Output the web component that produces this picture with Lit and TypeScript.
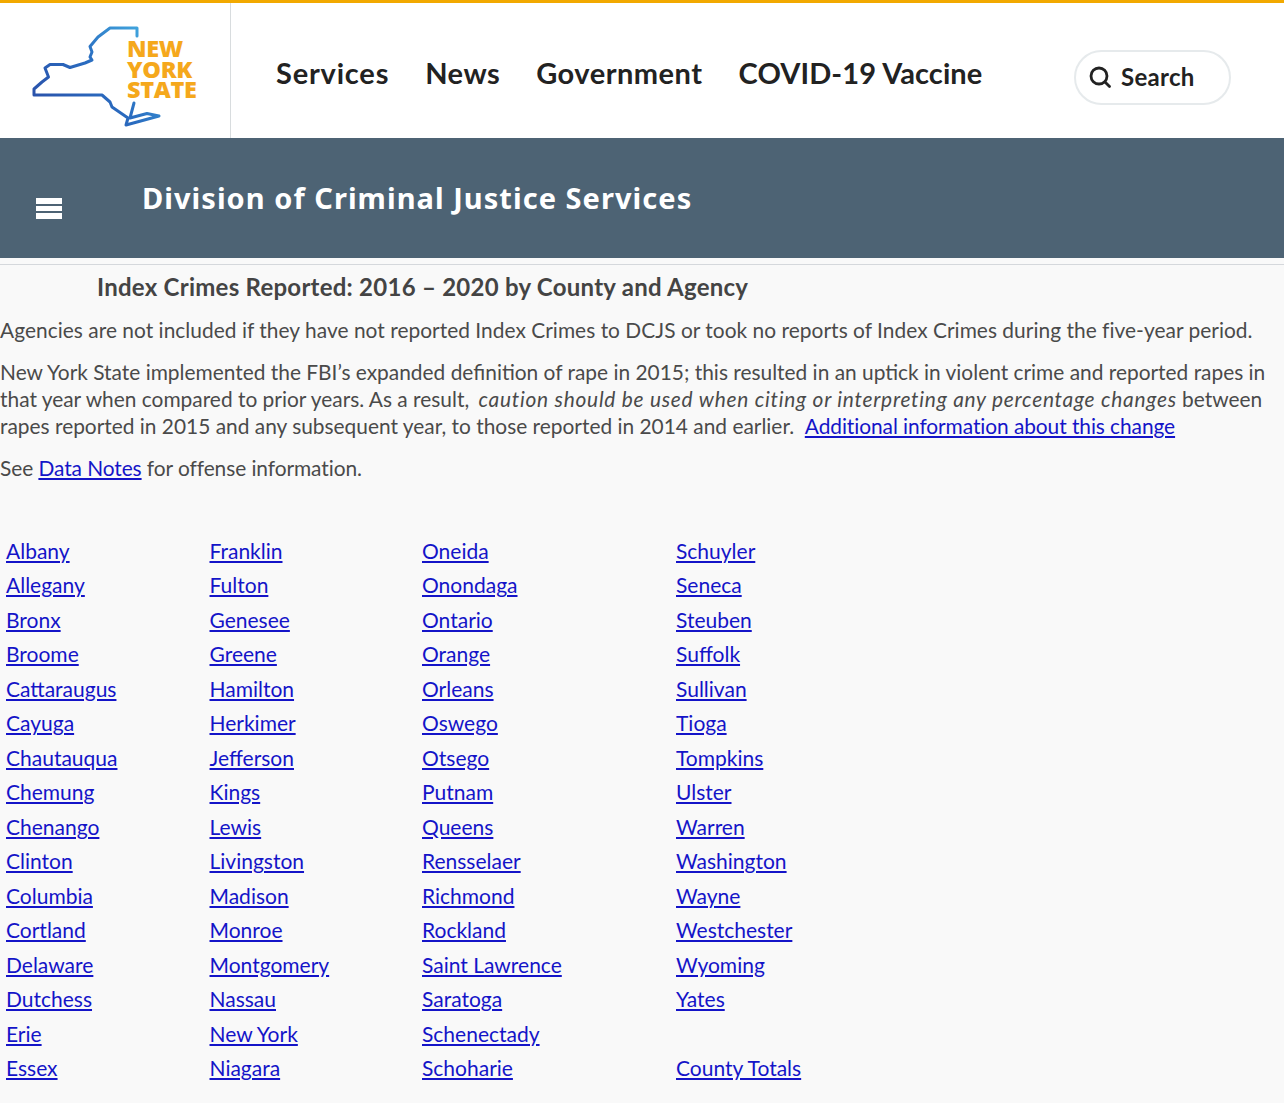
import { LitElement, html, css, svg } from "lit";
import { customElement } from "lit/decorators.js";

const rows: string[][] = [
  ["Albany", "Franklin", "Oneida", "Schuyler"],
  ["Allegany", "Fulton", "Onondaga", "Seneca"],
  ["Bronx", "Genesee", "Ontario", "Steuben"],
  ["Broome", "Greene", "Orange", "Suffolk"],
  ["Cattaraugus", "Hamilton", "Orleans", "Sullivan"],
  ["Cayuga", "Herkimer", "Oswego", "Tioga"],
  ["Chautauqua", "Jefferson", "Otsego", "Tompkins"],
  ["Chemung", "Kings", "Putnam", "Ulster"],
  ["Chenango", "Lewis", "Queens", "Warren"],
  ["Clinton", "Livingston", "Rensselaer", "Washington"],
  ["Columbia", "Madison", "Richmond", "Wayne"],
  ["Cortland", "Monroe", "Rockland", "Westchester"],
  ["Delaware", "Montgomery", "Saint Lawrence", "Wyoming"],
  ["Dutchess", "Nassau", "Saratoga", "Yates"],
  ["Erie", "New York", "Schenectady", ""],
  ["Essex", "Niagara", "Schoharie", "County Totals"],
];

@customElement("app-root")
export class AppRoot extends LitElement {
  static styles = css`
    :host {
      display: block;
      width: 1284px;
      height: 1103px;
      overflow: hidden;
      background: #f9f9f9;
      font-family: "Lato", "Open Sans", sans-serif;
      color: #4a4a4a;
    }
    .top {
      display: flex;
      height: 135px;
      background: #fff;
      border-top: 3px solid #f2a900;
    }
    .logo {
      position: relative;
      width: 230px;
      flex: none;
      border-right: 1px solid #d8dcde;
    }
    .logo svg { position: absolute; left: 0; top: -3px; }
    .logo-text {
      position: absolute;
      left: 127px;
      top: 35px;
      font: 800 23.500px/20.500px "Open Sans", sans-serif;
      letter-spacing: -0.35px;
      color: #f5a81c;
    }
    .nav {
      display: flex;
      gap: 36px;
      padding: 52px 0 0 45px;
      font-size: 29px;
      font-weight: 700;
      line-height: 36px;
      letter-spacing: 0.5px;
      color: #222;
      flex: 1;
    }
    .nav span { white-space: nowrap; }
    .nav .services { letter-spacing: 0.8px; }
    .nav .vaccine { letter-spacing: 0.1px; }
    .search {
      display: flex;
      align-items: center;
      gap: 9px;
      box-sizing: border-box;
      width: 157px;
      height: 55px;
      margin: 47px 53px 0 0;
      padding: 0 0 2px 12px;
      border: 2px solid #e6eaec;
      border-radius: 28px;
      font-size: 24px;
      font-weight: 700;
      letter-spacing: 0.3px;
      color: #222;
    }
    .band {
      display: flex;
      height: 120px;
      background: #4d6374;
      color: #fff;
    }
    .burger {
      display: flex;
      flex-direction: column;
      gap: 2px;
      width: 26px;
      margin: 60px 0 0 36px;
      flex: none;
    }
    .burger i { display: block; height: 5.700px; background: #fff; }
    .band h2 {
      margin: 43px 0 0 80px;
      font: 700 29px/34px "Noto Sans", sans-serif;
      letter-spacing: 1.040px;
      white-space: nowrap;
    }
    .rule { height: 1px; margin-top: 6px; background: #d5d8dc; }
    .content { font-size: 20.900px; line-height: 27px; }
    h3 {
      margin: 8px 0 0 97px;
      font-size: 24px;
      line-height: 27px;
      font-weight: 700;
      letter-spacing: 0.25px;
      color: #444;
    }
    p { margin: 15px 0 0; }
    .lead { margin-top: 16px; letter-spacing: 0.035px; }
    .wide em { margin-left: 4px; letter-spacing: 0.75px; }
    .wide a { letter-spacing: -0.07px; }
    .see { letter-spacing: -0.07px; }
    a { color: #1414c8; text-decoration: underline; text-underline-offset: 2px; }
    .counties {
      display: grid;
      grid-template-columns: 203.500px 212.500px 254px 1fr;
      grid-auto-rows: 34.500px;
      margin: 52.500px 0 0 6px;
      font-size: 21px;
      line-height: 34.500px;
    }
  `;

  private logo() {
    return html`<svg width="230" height="139" viewBox="0 0 230 139" fill="none">
      <defs>
        <linearGradient id="ny" x1="34" y1="110" x2="137" y2="28" gradientUnits="userSpaceOnUse">
          <stop offset="0" stop-color="#2a4fa8"></stop>
          <stop offset="0.55" stop-color="#2a6cc0"></stop>
          <stop offset="1" stop-color="#3fa2dc"></stop>
        </linearGradient>
      </defs>
      ${svg`<path stroke="url(#ny)" stroke-width="3" stroke-linejoin="round" stroke-linecap="round"
        d="M137 36V28H110L98 37L90 46.500L92 52L90 57L92 60L85 63L70 67.500L63 64.500H50L45 68L48.500 77L42 82L34 89V95H102L110 102L112 107L128 118L126 125L159 116L147 113.500L130 118L134 103" />`}
    </svg>`;
  }

  render() {
    return html`
      <div class="top">
        <div class="logo">
          ${this.logo()}
          <div class="logo-text">NEW<br />YORK<br />STATE</div>
        </div>
        <div class="nav">
          <span class="services">Services</span><span>News</span><span>Government</span><span class="vaccine">COVID-19 Vaccine</span>
        </div>
        <div class="search">
          <svg width="24" height="24" viewBox="0 0 24 24" fill="none" stroke="#222" stroke-width="2.800" stroke-linecap="round">
            <circle cx="11" cy="11" r="8"></circle>
            <path d="M17 17l4.500 4.500"></path>
          </svg>
          <span>Search</span>
        </div>
      </div>
      <div class="band">
        <div class="burger"><i></i><i></i><i></i></div>
        <h2>Division of Criminal Justice Services</h2>
      </div>
      <div class="rule"></div>
      <div class="content">
        <h3>Index Crimes Reported: 2016 – 2020 by County and Agency</h3>
        <p class="lead">Agencies are not included if they have not reported Index Crimes to DCJS or took no reports of Index Crimes during the five-year period.</p>
        <p class="wide">New York State implemented the FBI’s expanded definition of rape in 2015; this resulted in an uptick in violent crime and reported rapes in that year when compared to prior years. As a result, <em>caution should be used when citing or interpreting any percentage changes</em> between rapes reported in 2015 and any subsequent year, to those reported in 2014 and earlier.&nbsp; <a href="#">Additional information about this change</a></p>
        <p class="see">See <a href="#">Data Notes</a> for offense information.</p>
        <div class="counties">
          ${rows.map((r) => r.map((c) => html`<div>${c ? html`<a href="#">${c}</a>` : ""}</div>`))}
        </div>
      </div>
    `;
  }
}
